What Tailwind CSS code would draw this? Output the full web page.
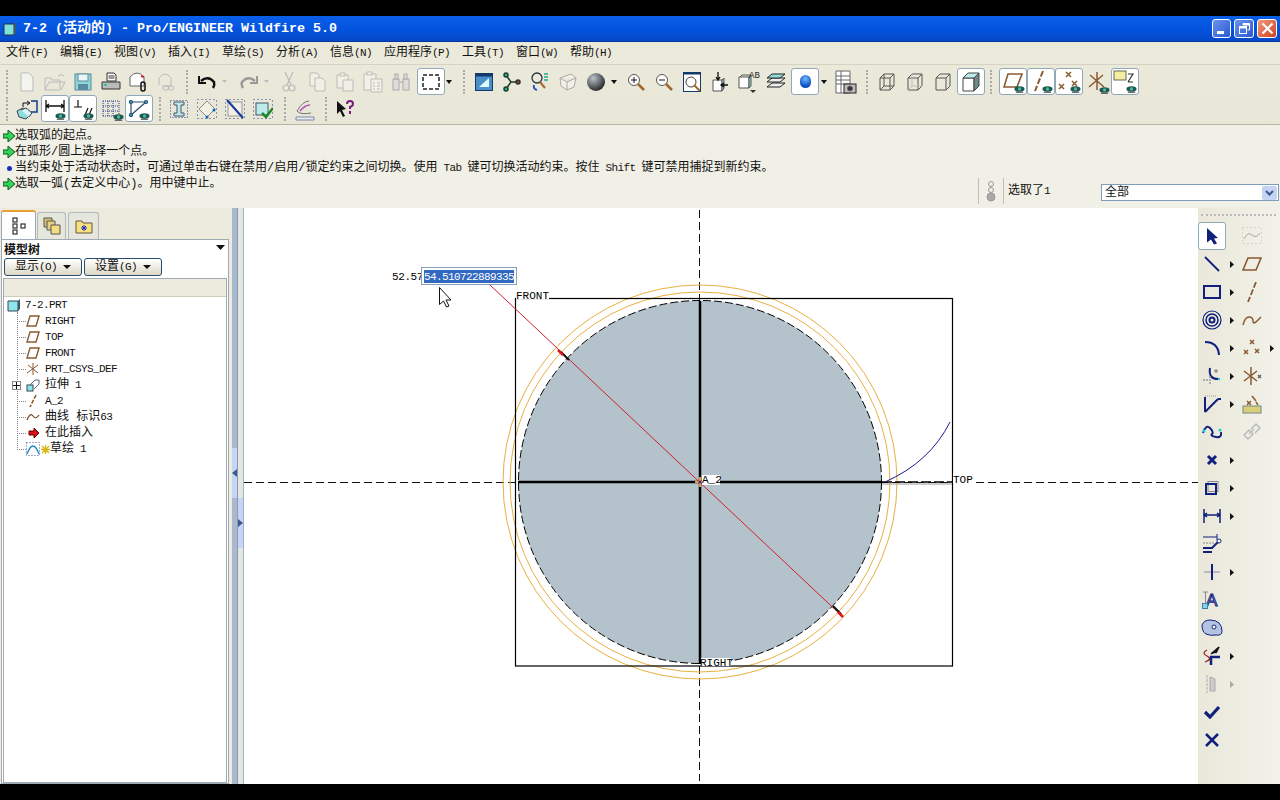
<!DOCTYPE html>
<html lang="zh-CN">
<head>
<meta charset="UTF-8">
<title>7-2 (活动的) - Pro/ENGINEER Wildfire 5.0</title>
<script src="https://cdn.jsdelivr.net/npm/@tailwindcss/browser@4"></script>
</head>
<body class="bg-black overflow-hidden">
<svg class="hidden">
  <symbol id="eye" viewBox="0 0 12 8"><ellipse cx="6" cy="4" rx="5.5" ry="3" fill="#1e5a50"/><circle cx="6" cy="4" r="1.8" fill="#4fb5a5"/><path d="M2 7.5h8" stroke="#222" stroke-width="1"/></symbol>
  <symbol id="mini" viewBox="0 0 5 7"><path d="M0 0l4 3.5L0 7z" fill="#111"/></symbol>
</svg>
<div class="w-[1280px] h-[800px] flex flex-col font-['Liberation_Mono','Noto_Sans_CJK_SC',monospace] text-[12px] leading-4 text-[#111]">
  <!-- top black band -->
  <div class="h-[16px] bg-black"></div>

  <!-- Title bar -->
  <div class="h-[26px] bg-gradient-to-b from-[#0a5fe8] via-[#0454e0] to-[#0448c8] flex items-center pl-[3px] pr-[3px] border-b border-[#03379c]">
    <svg width="14" height="14" viewBox="0 0 14 14" class="mr-[6px]"><path d="M1 2h10v11H1z" fill="#7fe0dc" stroke="#234" stroke-width="1"/><path d="M11 2l2-1v10l-2 2z" fill="#456"/></svg>
    <span class="text-white font-bold text-[13.33px] whitespace-pre">7-2 (<span class="text-[14px]">活动的</span>) - Pro/ENGINEER Wildfire 5.0</span>
    <div class="ml-auto flex gap-[3px]">
      <div class="w-[19px] h-[19px] rounded-[3px] border border-white bg-gradient-to-br from-[#6a94ef] to-[#2a57d0] flex items-end pl-[4px] pb-[3px]"><div class="w-[7px] h-[3px] bg-white"></div></div>
      <div class="w-[20px] h-[19px] rounded-[3px] border border-white bg-gradient-to-br from-[#6a94ef] to-[#2a57d0] flex items-center justify-center">
        <svg width="13" height="13" viewBox="0 0 13 13" fill="none" stroke="#fff"><path d="M5 3V1.5h6.5V8H9.5"/><path d="M5 2.5h6.5" stroke-width="2"/><rect x="1.5" y="4.5" width="7" height="7"/><path d="M1.5 5.5h7" stroke-width="2"/></svg>
      </div>
      <div class="w-[20px] h-[19px] rounded-[3px] border border-white bg-gradient-to-br from-[#ee9a7e] to-[#d23c14] flex items-center justify-center">
        <svg width="13" height="13" viewBox="0 0 13 13" stroke="#fff" stroke-width="2.2"><path d="M1.5 1.5l10 10M11.5 1.5l-10 10"/></svg>
      </div>
    </div>
  </div>

  <!-- Menu bar -->
  <div class="h-[23px] bg-[#ebe9da] flex items-center pl-[6px] gap-[12px] whitespace-nowrap border-b border-[#d5d3c4]">
    <span class="w-[42px]">文件<span class="text-[11px] tracking-[-0.6px]">(F)</span></span>
    <span class="w-[42px]">编辑<span class="text-[11px] tracking-[-0.6px]">(E)</span></span>
    <span class="w-[42px]">视图<span class="text-[11px] tracking-[-0.6px]">(V)</span></span>
    <span class="w-[42px]">插入<span class="text-[11px] tracking-[-0.6px]">(I)</span></span>
    <span class="w-[42px]">草绘<span class="text-[11px] tracking-[-0.6px]">(S)</span></span>
    <span class="w-[42px]">分析<span class="text-[11px] tracking-[-0.6px]">(A)</span></span>
    <span class="w-[42px]">信息<span class="text-[11px] tracking-[-0.6px]">(N)</span></span>
    <span class="w-[66px]">应用程序<span class="text-[11px] tracking-[-0.6px]">(P)</span></span>
    <span class="w-[42px]">工具<span class="text-[11px] tracking-[-0.6px]">(T)</span></span>
    <span class="w-[42px]">窗口<span class="text-[11px] tracking-[-0.6px]">(W)</span></span>
    <span class="w-[42px]">帮助<span class="text-[11px] tracking-[-0.6px]">(H)</span></span>
  </div>

  <!-- Toolbars -->
  <div class="h-[60px] bg-gradient-to-b from-[#ebe9da] to-[#e8e6d6] border-b border-[#b8b6a6] flex flex-col pt-[3px]">
    <!-- row 1 -->
    <div class="h-[27px] flex items-center pl-[6px]">
      <div class="w-[2px] h-[24px] border-l-2 border-dotted border-[#aaa] mr-[5px]"></div>
      <div class="w-[28px] h-[27px] flex items-center justify-center"><svg width="16" height="20" viewBox="0 0 16 20" fill="#f4f4ee" stroke="#bbb"><path d="M2 1h8l4 4v14H2z"/></svg></div>
      <div class="w-[28px] h-[27px] flex items-center justify-center"><svg width="22" height="20" viewBox="0 0 22 20" fill="none" stroke="#bbb"><path d="M1 18V6h6l1 2h8v10zM1 18l4-8h16l-4 8M14 4q3-3 6 0"/></svg></div>
      <div class="w-[28px] h-[27px] flex items-center justify-center"><svg width="18" height="18" viewBox="0 0 18 18"><rect x="1" y="1" width="16" height="16" fill="#8fd8d8" stroke="#5c8aa0"/><rect x="4" y="1" width="10" height="7" fill="#eaf6f6" stroke="#5c8aa0"/><rect x="4" y="11" width="10" height="6" fill="#5c8aa0"/></svg></div>
      <div class="w-[28px] h-[27px] flex items-center justify-center"><svg width="20" height="20" viewBox="0 0 20 20"><path d="M6 1h7l2 2v6H6z" fill="#fff" stroke="#333"/><path d="M7.500 4h6M7.500 6h6" stroke="#333"/><path d="M1 10h18v7H1z" fill="#bbb" stroke="#333"/><path d="M3 13h3" stroke="#2c9" stroke-width="2"/></svg></div>
      <div class="w-[28px] h-[27px] flex items-center justify-center"><svg width="20" height="22" viewBox="0 0 20 22" fill="#fff" stroke="#666"><path d="M1 6q7-8 14 0v9H1z"/><path d="M12 5l3 1" stroke="#b33" stroke-width="2"/><rect x="12" y="11" width="4" height="9" rx="2" fill="none" stroke="#111" stroke-width="1.500"/></svg></div>
      <div class="w-[28px] h-[27px] flex items-center justify-center"><svg width="20" height="22" viewBox="0 0 20 22" fill="none" stroke="#bbb"><path d="M2 14V7q6-8 12 0v8H5"/><rect x="6" y="15" width="6" height="4" rx="2"/><rect x="11" y="15" width="6" height="4" rx="2"/></svg></div>
      <div class="w-[2px] h-[24px] border-l-2 border-dotted border-[#aaa] ml-[5px] mr-[5px]"></div>
      <div class="w-[28px] h-[27px] flex items-center justify-center"><svg width="20" height="16" viewBox="0 0 20 16" fill="none" stroke="#111" stroke-width="2.500"><path d="M4 7q7-6 13 1 1 3-1 6"/><path d="M2 2v7h7" stroke-width="2"/></svg></div>
      <svg width="5" height="3" viewBox="0 0 5 3" class="mx-[1px]"><path d="M0 0h5L2.500 3z" fill="#bbb"/></svg>
      <div class="w-[28px] h-[27px] ml-[7px] flex items-center justify-center"><svg width="20" height="16" viewBox="0 0 20 16" fill="none" stroke="#999" stroke-width="2.500"><path d="M16 7q-7-6-13 1-1 3 1 6"/><path d="M18 2v7h-7" stroke-width="2"/></svg></div>
      <svg width="5" height="3" viewBox="0 0 5 3" class="mx-[1px]"><path d="M0 0h5L2.500 3z" fill="#bbb"/></svg>
      <div class="w-[28px] h-[27px] ml-[5px] flex items-center justify-center"><svg width="14" height="22" viewBox="0 0 14 22" fill="none" stroke="#bbb" stroke-width="1.200"><path d="M3 1l6 13M11 1L5 14"/><circle cx="4" cy="17" r="3"/><circle cx="10" cy="17" r="3"/></svg></div>
      <div class="w-[28px] h-[27px] flex items-center justify-center"><svg width="18" height="20" viewBox="0 0 18 20" fill="#f2f0e4" stroke="#bbb"><path d="M2 1h7l2 2v11H2z"/><path d="M7 6h7l3 3v10H7z"/></svg></div>
      <div class="w-[28px] h-[27px] flex items-center justify-center"><svg width="18" height="20" viewBox="0 0 18 20" fill="#f2f0e4" stroke="#bbb"><path d="M1 3h11v13H1z"/><path d="M4 1h5v3H4z"/><path d="M7 8h10v11H7z"/></svg></div>
      <div class="w-[28px] h-[27px] flex items-center justify-center"><svg width="20" height="22" viewBox="0 0 20 22" fill="#f2f0e4" stroke="#bbb"><path d="M1 3h12v16H1z"/><path d="M4 1h5v3H4z"/><path d="M8 8h11v13H8z"/><path d="M10 12h2M14 12h3M10 15h2M14 15h3M10 18h2M14 18h3"/></svg></div>
      <div class="w-[28px] h-[27px] flex items-center justify-center"><svg width="18" height="18" viewBox="0 0 18 18" fill="#ddd" stroke="#aaa"><rect x="1" y="6" width="6" height="11"/><rect x="11" y="6" width="6" height="11"/><rect x="3" y="1" width="3" height="5"/><rect x="12" y="1" width="3" height="5"/><path d="M7 9h4"/></svg></div>
      <div class="w-[28px] h-[27px] ml-[2px] bg-white border border-[#90a8b8] rounded-[3px] flex items-center justify-center"><svg width="18" height="16" viewBox="0 0 18 16" fill="none" stroke="#222" stroke-width="1.500" stroke-dasharray="4 2"><rect x="1" y="1" width="16" height="14"/></svg></div>
      <svg width="6" height="4" viewBox="0 0 6 4" class="mx-[1px]"><path d="M0 0h6L3 4z" fill="#111"/></svg>
      <div class="w-[2px] h-[24px] border-l-2 border-dotted border-[#aaa] ml-[10px] mr-[5px]"></div>
      <div class="w-[28px] h-[27px] flex items-center justify-center"><svg width="18" height="18" viewBox="0 0 18 18"><rect x=".5" y=".5" width="17" height="17" fill="#4b8ec8" stroke="#123a6a"/><rect x=".5" y=".5" width="17" height="3" fill="#123a6a"/><path d="M4 14L14 5v9z" fill="#dff"/></svg></div>
      <div class="w-[28px] h-[27px] flex items-center justify-center"><svg width="18" height="20" viewBox="0 0 18 20" fill="none" stroke="#1d3d2a" stroke-width="1.500"><path d="M3 3l5 7-5 7M8 10h7"/><circle cx="3" cy="3" r="2" fill="#1db5a0"/><circle cx="3" cy="17" r="2" fill="#1db5a0"/><circle cx="15" cy="10" r="2" fill="#c22"/></svg></div>
      <div class="w-[28px] h-[27px] flex items-center justify-center"><svg width="20" height="20" viewBox="0 0 20 20" fill="none" stroke="#234" stroke-width="1.300"><circle cx="7" cy="6" r="5"/><path d="M14 2h4M14 5h4M14 8h4" stroke="#2a8"/><path d="M10 10l5 6" stroke="#a63" stroke-width="2"/><path d="M4 13q-1 4 3 5" stroke="#25c" stroke-width="2"/></svg></div>
      <div class="w-[28px] h-[27px] flex items-center justify-center"><svg width="18" height="18" viewBox="0 0 18 18" fill="#f2f0e4" stroke="#aaa"><path d="M1 5l11-4 5 4-2 9-7 3-6-4zM1 5l7 4 9-4M8 9v8"/></svg></div>
      <div class="w-[28px] h-[27px] flex items-center justify-center"><div class="w-[18px] h-[18px] rounded-full bg-[radial-gradient(circle_at_35%_30%,#b8c4cc,#333_70%)]"></div></div>
      <svg width="6" height="4" viewBox="0 0 6 4" class="ml-[1px] mr-[5px]"><path d="M0 0h6L3 4z" fill="#111"/></svg>
      <div class="w-[28px] h-[27px] flex items-center justify-center"><svg width="18" height="18" viewBox="0 0 18 18" fill="none"><circle cx="7" cy="7" r="5.500" stroke="#555" fill="#fff"/><path d="M4 7h6M7 4v6" stroke="#111"/><path d="M11 11l6 6" stroke="#a0662a" stroke-width="2.500"/></svg></div>
      <div class="w-[28px] h-[27px] flex items-center justify-center"><svg width="18" height="18" viewBox="0 0 18 18" fill="none"><circle cx="7" cy="7" r="5.500" stroke="#555" fill="#fff"/><path d="M4 7h6" stroke="#111"/><path d="M11 11l6 6" stroke="#a0662a" stroke-width="2.500"/></svg></div>
      <div class="w-[28px] h-[27px] flex items-center justify-center"><svg width="18" height="20" viewBox="0 0 18 20" fill="none"><rect x=".5" y=".5" width="17" height="19" fill="#fff" stroke="#123a6a"/><rect x=".5" y=".5" width="17" height="2" fill="#123a6a"/><circle cx="8" cy="10" r="5" stroke="#444"/><path d="M11 13l6 6" stroke="#a0662a" stroke-width="2"/></svg></div>
      <div class="w-[28px] h-[27px] flex items-center justify-center"><svg width="18" height="20" viewBox="0 0 18 20" fill="none"><path d="M2 8h9v11H2z" fill="#fff" stroke="#555"/><path d="M11 8l2-2v10l-2 3z" fill="#8fdcdc" stroke="#555"/><path d="M7 0v7M5 5l2 3 2-3" stroke="#111" stroke-width="1.300"/><path d="M17 13h-6M13 11l-3 2 3 2" stroke="#111" stroke-width="1.300"/></svg></div>
      <div class="w-[28px] h-[27px] flex items-center justify-center relative"><svg width="20" height="22" viewBox="0 0 20 22" fill="none"><path d="M1 6h10v11H1z" fill="#fff" stroke="#555"/><path d="M11 6l2-2v11l-2 2z" fill="#8fdcdc" stroke="#555"/><path d="M2 6l2-2h9" stroke="#555"/><path d="M12 19h6l-3 3z" fill="#333"/></svg><span class="absolute left-[15px] top-[3px] text-[9px] leading-[10px] text-[#222]">AB</span></div>
      <div class="w-[28px] h-[27px] flex items-center justify-center"><svg width="20" height="18" viewBox="0 0 20 18" fill="#eee" stroke="#222"><path d="M1 14l5-4h13l-5 4z"/><path d="M1 9l5-4h13l-5 4z"/><path d="M1 5l5-4h13l-5 4z" fill="#8fdcdc"/></svg></div>
      <div class="w-[28px] h-[27px] ml-[1px] bg-white border border-[#90a8b8] rounded-[3px] flex items-center justify-center"><div class="w-[11px] h-[13px] rounded-full bg-[radial-gradient(circle_at_50%_30%,#6fb8ff,#0a4fc0_70%)]"></div></div>
      <svg width="6" height="4" viewBox="0 0 6 4" class="ml-[2px] mr-[7px]"><path d="M0 0h6L3 4z" fill="#111"/></svg>
      <div class="w-[24px] h-[27px] flex items-center justify-center"><svg width="22" height="24" viewBox="0 0 22 24" fill="#fff" stroke="#666"><path d="M1 1h14v22H1z"/><path d="M1 6h14M1 10h14M1 14h14M6 1v22"/><rect x="9" y="14" width="12" height="9" fill="#bbb" stroke="#222"/><circle cx="15" cy="18.500" r="2.500" fill="#333"/></svg></div>
      <div class="w-[2px] h-[24px] border-l-2 border-dotted border-[#aaa] ml-[8px] mr-[5px]"></div>
      <div class="w-[28px] h-[27px] flex items-center justify-center"><svg width="16" height="18" viewBox="0 0 16 18" fill="none" stroke="#555"><path d="M1 5h10v12H1zM1 5l4-4h10v12l-4 4M5 1v12h10M1 17l4-4M11 5l4-4"/></svg></div>
      <div class="w-[28px] h-[27px] flex items-center justify-center"><svg width="16" height="18" viewBox="0 0 16 18" fill="none" stroke="#555"><path d="M1 5h10v12H1zM1 5l4-4h10v12l-4 4M11 5l4-4"/><path d="M5 1v12h10M1 17l4-4" stroke="#bbb"/></svg></div>
      <div class="w-[28px] h-[27px] flex items-center justify-center"><svg width="16" height="18" viewBox="0 0 16 18" fill="none" stroke="#555"><path d="M1 5h10v12H1zM1 5l4-4h10v12l-4 4M11 5l4-4"/></svg></div>
      <div class="w-[28px] h-[27px] bg-white border border-[#90a8b8] rounded-[3px] flex items-center justify-center"><svg width="18" height="20" viewBox="0 0 18 20"><path d="M1 6h11v13H1z" fill="#fff" stroke="#444"/><path d="M1 6l5-5h11l-5 5z" fill="#bdeaea" stroke="#444"/><path d="M12 6l5-5v13l-5 5z" fill="#6c8a8a" stroke="#444"/></svg></div>
      <div class="w-[2px] h-[24px] border-l-2 border-dotted border-[#aaa] ml-[5px] mr-[7px]"></div>
      <div class="w-[28px] h-[27px] bg-white border border-[#90a8b8] rounded-[3px] relative"><svg width="20" height="16" viewBox="0 0 20 16" class="ml-[3px] mt-[4px]" fill="none" stroke="#8a5a30" stroke-width="1.600"><path d="M5 1h14l-5 13H1z"/></svg><svg class="absolute right-[1px] bottom-[1px]" width="11" height="8"><use href="#eye"/></svg></div>
      <div class="w-[28px] h-[27px] bg-white border border-[#90a8b8] rounded-[3px] relative"><svg width="12" height="22" viewBox="0 0 12 22" class="ml-[5px] mt-[1px]" stroke="#8a5a30" stroke-width="2" stroke-dasharray="6 2"><path d="M10 1L2 21"/></svg><svg class="absolute right-[1px] bottom-[1px]" width="11" height="8"><use href="#eye"/></svg></div>
      <div class="w-[28px] h-[27px] bg-white border border-[#90a8b8] rounded-[3px] relative"><svg width="22" height="22" viewBox="0 0 22 22" class="ml-[2px] mt-[1px]" stroke="#8a5a30" stroke-width="1.500"><path d="M8 2l5 5M13 2L8 7M1 14l5 5M6 14l-5 5M14 11l5 5M19 11l-5 5"/></svg><svg class="absolute right-[1px] bottom-[1px]" width="11" height="8"><use href="#eye"/></svg></div>
      <div class="w-[28px] h-[27px] relative"><svg width="24" height="24" viewBox="0 0 24 24" class="ml-[2px] mt-[1px]" stroke="#8a5a30" stroke-width="1.500" fill="none"><path d="M12 3v18M4 18L18 6M5 6l14 12"/></svg><svg class="absolute right-[1px] bottom-[1px]" width="11" height="8"><use href="#eye"/></svg></div>
      <div class="w-[28px] h-[27px] bg-white border border-[#90a8b8] rounded-[3px] relative"><svg width="24" height="22" viewBox="0 0 24 22" class="ml-[1px] mt-[1px]" fill="none"><rect x="1" y="1" width="12" height="9" fill="#f4eea0" stroke="#665"/><path d="M15 4h5l-5 8M15 12h5" stroke="#333" stroke-width="1.200"/></svg><svg class="absolute right-[1px] bottom-[1px]" width="11" height="8"><use href="#eye"/></svg></div>
    </div>
    <!-- row 2 -->
    <div class="h-[27px] flex items-center pl-[6px]">
      <div class="w-[2px] h-[24px] border-l-2 border-dotted border-[#aaa] mr-[5px]"></div>
      <div class="w-[28px] h-[27px] flex items-center justify-center"><svg width="22" height="22" viewBox="0 0 22 22" fill="none"><path d="M15 3h6v11h-6" stroke="#123a8a" stroke-width="1.500"/><path d="M7 9V5h6M11 3l3 2-3 2" stroke="#111"/><path d="M1 13l6-3 8 6-5 5-7-2z" fill="#8fdcdc" stroke="#345"/><path d="M5 12l5-2 6 5-3 4" fill="#d8f4f4" stroke="#345"/></svg></div>
      <div class="w-[28px] h-[27px] bg-white border border-[#90a8b8] rounded-[3px] relative"><svg width="20" height="12" viewBox="0 0 20 12" class="ml-[3px] mt-[4px]" stroke="#111" stroke-width="1.300" fill="none"><path d="M1 0v12M19 0v12M1 6h18M4 4L1 6l3 2M16 4l3 2-3 2"/></svg><svg class="absolute right-[2px] bottom-[1px]" width="11" height="8"><use href="#eye"/></svg></div>
      <div class="w-[28px] h-[27px] bg-white border border-[#90a8b8] rounded-[3px] relative"><svg width="20" height="18" viewBox="0 0 20 18" class="ml-[3px] mt-[3px]" stroke="#111" stroke-width="1.200" fill="none"><path d="M1 8h8M5 1v7M12 16l3-7M16 16l3-7"/></svg><svg class="absolute right-[2px] bottom-[1px]" width="11" height="8"><use href="#eye"/></svg></div>
      <div class="w-[28px] h-[27px] relative flex items-center justify-center"><svg width="18" height="18" viewBox="0 0 18 18" stroke="#2a3a90" stroke-width="1" stroke-dasharray="1 1" fill="none"><path d="M1 1h16M1 6h16M1 11h16M1 16h16M1 1v16M6 1v16M11 1v16M17 1v16"/></svg><svg class="absolute right-[1px] bottom-[1px]" width="11" height="8"><use href="#eye"/></svg></div>
      <div class="w-[28px] h-[27px] bg-white border border-[#90a8b8] rounded-[3px] relative"><svg width="20" height="18" viewBox="0 0 20 18" class="ml-[3px] mt-[3px]" stroke="#2a4a70" stroke-width="1.200" fill="none"><path d="M2 3h15M2 3v13M2 16L17 3"/><circle cx="2" cy="3" r="1.500" fill="#2cc"/><circle cx="17" cy="3" r="1.500" fill="#2cc"/><circle cx="2" cy="16" r="1.500" fill="#2cc"/></svg><svg class="absolute right-[2px] bottom-[1px]" width="11" height="8"><use href="#eye"/></svg></div>
      <div class="w-[2px] h-[24px] border-l-2 border-dotted border-[#aaa] ml-[6px] mr-[4px]"></div>
      <div class="w-[28px] h-[27px] flex items-center justify-center"><svg width="18" height="18" viewBox="0 0 18 18"><path d="M4 2h10v3h-3v8h3v3H4v-3h3V5H4z" fill="#bdeaea" stroke="#456"/><rect x=".5" y=".5" width="17" height="17" fill="none" stroke="#2a3a90" stroke-dasharray="1 2"/></svg></div>
      <div class="w-[28px] h-[27px] flex items-center justify-center"><svg width="20" height="20" viewBox="0 0 20 20"><path d="M10 2l8 8-8 8-8-8z" fill="#f2f0e4" stroke="#888"/><rect x=".5" y=".5" width="19" height="19" fill="none" stroke="#2a3a90" stroke-dasharray="1 3"/><circle cx="17" cy="11" r="1.500" fill="#16a"/><circle cx="10" cy="18" r="1.500" fill="#16a"/></svg></div>
      <div class="w-[28px] h-[27px] flex items-center justify-center"><svg width="20" height="20" viewBox="0 0 20 20"><rect x="3" y="3" width="14" height="14" fill="#f2f0e4" stroke="#999"/><path d="M2 1l16 18" stroke="#123a9a" stroke-width="2"/><rect x=".5" y=".5" width="19" height="19" fill="none" stroke="#2a3a90" stroke-dasharray="1 3"/></svg></div>
      <div class="w-[28px] h-[27px] flex items-center justify-center"><svg width="20" height="20" viewBox="0 0 20 20"><rect x="3" y="4" width="12" height="12" fill="#bdeaea" stroke="#456"/><rect x=".5" y=".5" width="19" height="19" fill="none" stroke="#2a3a90" stroke-dasharray="1 3"/><path d="M9 14l4 4 7-9" fill="none" stroke="#1a8a2a" stroke-width="2.500"/></svg></div>
      <div class="w-[2px] h-[24px] border-l-2 border-dotted border-[#aaa] ml-[7px] mr-[5px]"></div>
      <div class="w-[28px] h-[27px] flex items-center justify-center"><svg width="20" height="24" viewBox="0 0 20 24" fill="none"><path d="M2 14q6-10 12-10" stroke="#777"/><path d="M5 14q5-6 10-6" stroke="#b64cc0" stroke-width="1.500"/><path d="M2 14q3 4 14 2" stroke="#777"/><path d="M1 20h18v3H1z" fill="#eee" stroke="#78a"/></svg></div>
      <div class="w-[2px] h-[24px] border-l-2 border-dotted border-[#aaa] ml-[6px] mr-[4px]"></div>
      <div class="w-[28px] h-[27px] flex items-center justify-center"><svg width="18" height="18" viewBox="0 0 18 18"><path d="M1 1l9 8-4 1 3 6-2 1-3-6-3 3z" fill="#111"/><path d="M11 4q0-3 3-3t3 3q0 2-3 3v2" fill="none" stroke="#7a1a7a" stroke-width="2"/><path d="M14 11v3" stroke="#7a1a7a" stroke-width="2"/></svg></div>
    </div>
  </div>

  <!-- Message area -->
  <div class="h-[83px] bg-[#f1f0e6] relative flex flex-col pt-[3px] whitespace-pre">
    <div class="h-[16px] flex items-center pl-[3px]"><svg width="12" height="12" viewBox="0 0 12 12"><path d="M0 4h5V0l7 6-7 6V8H0z" fill="#35d25a" stroke="#0b5a20"/></svg><span>选取弧的起点。</span></div>
    <div class="h-[16px] flex items-center pl-[3px]"><svg width="12" height="12" viewBox="0 0 12 12"><path d="M0 4h5V0l7 6-7 6V8H0z" fill="#35d25a" stroke="#0b5a20"/></svg><span>在弧形/圆上选择一个点。</span></div>
    <div class="h-[16px] flex items-center pl-[3px]"><div class="w-[12px] flex justify-center"><div class="w-[5px] h-[5px] rounded-full bg-[#1530c8]"></div></div><span>当约束处于活动状态时，可通过单击右键在禁用/启用/锁定约束之间切换。使用<span class="text-[11px] tracking-[-0.6px]"> Tab </span>键可切换活动约束。按住<span class="text-[11px] tracking-[-0.6px]"> Shift </span>键可禁用捕捉到新约束。</span></div>
    <div class="h-[16px] flex items-center pl-[3px]"><svg width="12" height="12" viewBox="0 0 12 12"><path d="M0 4h5V0l7 6-7 6V8H0z" fill="#35d25a" stroke="#0b5a20"/></svg><span>选取一弧(去定义中心)。用中键中止。</span></div>
    <!-- selection status, sits over the message pane -->
    <div class="absolute left-[978px] top-[53px] h-[26px] flex items-center">
      <div class="w-[1px] h-[26px] bg-[#c2c0b0]"></div>
      <svg width="24" height="24" viewBox="0 0 24 24" fill="none" stroke="#999"><circle cx="12" cy="5" r="2.500"/><circle cx="12" cy="11" r="2.500"/><circle cx="12" cy="18" r="4" fill="#aaa"/></svg>
      <div class="w-[1px] h-[26px] bg-[#c2c0b0]"></div>
      <span class="ml-[4px]">选取了<span class="text-[11px] tracking-[-0.6px]">1</span></span>
    </div>
    <div class="absolute left-[1101px] top-[59px] w-[178px] h-[17px] bg-white border border-[#7f9db9] flex items-center pl-[3px]"><span>全部</span><div class="ml-auto mr-[1px] w-[15px] h-[14px] rounded-[2px] bg-[#c4d4f2] flex items-center justify-center"><svg width="9" height="6" viewBox="0 0 9 6" fill="none" stroke="#3a5a90" stroke-width="2"><path d="M1 1l3.500 3.500L8 1"/></svg></div></div>
  </div>

  <!-- Main -->
  <div class="h-[576px] flex bg-[#ecebdd]">
    <!-- Model tree panel -->
    <div class="w-[232px] flex flex-col pl-[1px] pr-[3px] pt-[2px]">
      <div class="h-[29px] flex items-end">
        <div class="w-[35px] h-[29px] bg-white border border-b-0 border-[#9aa8b8] border-t-2 border-t-[#e8a030] rounded-t-[3px] flex items-center justify-center"><svg width="14" height="18" viewBox="0 0 14 18" fill="#fff" stroke="#333" stroke-width="1.200"><rect x="1" y="1" width="4" height="4"/><rect x="1" y="7" width="4" height="4"/><rect x="9" y="7" width="4" height="4"/><rect x="1" y="13" width="4" height="4"/></svg></div>
        <div class="ml-[1px] w-[29px] h-[27px] bg-[#e5e6dc] border border-b-0 border-[#b0b8c0] rounded-t-[3px] flex items-center justify-center"><svg width="18" height="18" viewBox="0 0 18 18" stroke="#555" fill="#f4dc80"><path d="M1 1h8v9H1z" fill="#d8c070"/><path d="M4 4h8v9H4z" fill="#e8d080"/><path d="M8 8h9v9H8z"/></svg></div>
        <div class="ml-[2px] w-[31px] h-[27px] bg-[#e5e6dc] border border-b-0 border-[#b0b8c0] rounded-t-[3px] flex items-center justify-center"><svg width="18" height="16" viewBox="0 0 18 16" stroke="#654" fill="#f4e27c"><path d="M1 3h6l1 2h9v10H1z"/><path d="M9 7v6M6 10h6M7 8l4 4M11 8l-4 4" stroke="#1a2ac0"/></svg></div>
      </div>
      <div class="flex-1 bg-white border border-[#a0aab4] flex flex-col px-[1px]">
        <div class="h-[18px] flex items-center justify-between pl-[1px] pr-[2px] pt-[3px]"><span class="font-bold">模型树</span><svg width="9" height="5" viewBox="0 0 9 5" class="-mt-[6px]"><path d="M0 0h9L4.500 5z" fill="#111"/></svg></div>
        <div class="h-[19px] flex gap-[2px] pl-[1px]">
          <div class="w-[78px] h-[18px] border border-[#274b6a] rounded-[3px] bg-gradient-to-b from-white to-[#dcd9c8] flex items-center justify-center gap-[6px]"><span>显示<span class="text-[11px] tracking-[-0.6px]">(O)</span></span><svg width="8" height="4" viewBox="0 0 8 4"><path d="M0 0h8L4 4z" fill="#111"/></svg></div>
          <div class="w-[78px] h-[18px] border border-[#274b6a] rounded-[3px] bg-gradient-to-b from-white to-[#dcd9c8] flex items-center justify-center gap-[6px]"><span>设置<span class="text-[11px] tracking-[-0.6px]">(G)</span></span><svg width="8" height="4" viewBox="0 0 8 4"><path d="M0 0h8L4 4z" fill="#111"/></svg></div>
        </div>
        <div class="flex-1 mt-[1px] border border-[#a0aab4] flex flex-col">
          <div class="h-[18px] bg-[#ecebdd] border-b border-[#cfcdbd]"></div>
          <div class="flex-1 flex flex-col relative">
            <div class="absolute left-[13px] top-[15px] h-[136px] border-l border-dotted border-[#888]"></div>
            <div class="h-[16px] flex items-center pl-[3px] gap-[4px]"><svg width="14" height="14" viewBox="0 0 14 14"><path d="M1 3h10v10H1z" fill="#8fe6ea" stroke="#345"/><path d="M11 3l2-2v10l-2 2z" fill="#456"/></svg><span class="text-[11px] tracking-[-0.6px]">7-2.PRT</span></div>
            <div class="h-[16px] flex items-center pl-[13px]"><div class="w-[9px] border-t border-dotted border-[#888]"></div><svg width="14" height="12" viewBox="0 0 14 12" fill="none" stroke="#8a5a30" stroke-width="1.400"><path d="M4 1h9l-3 10H1z"/></svg><span class="text-[11px] tracking-[-0.6px] ml-[5px]">RIGHT</span></div>
            <div class="h-[16px] flex items-center pl-[13px]"><div class="w-[9px] border-t border-dotted border-[#888]"></div><svg width="14" height="12" viewBox="0 0 14 12" fill="none" stroke="#8a5a30" stroke-width="1.400"><path d="M4 1h9l-3 10H1z"/></svg><span class="text-[11px] tracking-[-0.6px] ml-[5px]">TOP</span></div>
            <div class="h-[16px] flex items-center pl-[13px]"><div class="w-[9px] border-t border-dotted border-[#888]"></div><svg width="14" height="12" viewBox="0 0 14 12" fill="none" stroke="#8a5a30" stroke-width="1.400"><path d="M4 1h9l-3 10H1z"/></svg><span class="text-[11px] tracking-[-0.6px] ml-[5px]">FRONT</span></div>
            <div class="h-[16px] flex items-center pl-[13px]"><div class="w-[9px] border-t border-dotted border-[#888]"></div><svg width="14" height="14" viewBox="0 0 14 14" fill="none" stroke="#8a5a30" stroke-width="1"><path d="M7 1v12M1 11L12 3M2 3l10 8"/></svg><span class="text-[11px] tracking-[-0.6px] ml-[5px]">PRT_CSYS_DEF</span></div>
            <div class="h-[16px] flex items-center pl-[13px] relative"><div class="absolute left-[8px] top-[4px] w-[9px] h-[9px] bg-white border border-[#888] flex items-center justify-center"><svg width="7" height="7" viewBox="0 0 7 7" stroke="#111"><path d="M0 3.500h7M3.500 0v7"/></svg></div><div class="w-[9px]"></div><svg width="14" height="14" viewBox="0 0 14 14" fill="none"><rect x="1" y="7" width="6" height="6" fill="#8fe6ea" stroke="#345"/><path d="M4 7l5-5h4v4l-5 5" stroke="#567"/></svg><span class="ml-[5px]">拉伸<span class="text-[11px] tracking-[-0.6px]"> 1</span></span></div>
            <div class="h-[16px] flex items-center pl-[13px]"><div class="w-[9px] border-t border-dotted border-[#888]"></div><svg width="14" height="14" viewBox="0 0 14 14" stroke="#8a5a30" stroke-width="1.600" stroke-dasharray="4 1.500"><path d="M10 1L4 13"/></svg><span class="text-[11px] tracking-[-0.6px] ml-[5px]">A_2</span></div>
            <div class="h-[16px] flex items-center pl-[13px]"><div class="w-[9px] border-t border-dotted border-[#888]"></div><svg width="14" height="10" viewBox="0 0 14 10" fill="none" stroke="#6a4020" stroke-width="1.200"><path d="M1 8q3-8 6-4t6-1"/></svg><span class="ml-[5px]">曲线 标识<span class="text-[11px] tracking-[-0.6px]">63</span></span></div>
            <div class="h-[16px] flex items-center pl-[13px]"><div class="w-[9px] border-t border-dotted border-[#888]"></div><svg width="14" height="12" viewBox="0 0 14 12"><path d="M3 4h5V1l5 5-5 5V8H3z" fill="#d8101a" stroke="#600"/></svg><span class="ml-[5px]">在此插入</span></div>
            <div class="h-[16px] flex items-center pl-[13px]"><div class="w-[9px] border-t border-dotted border-[#888]"></div><svg width="14" height="14" viewBox="0 0 14 14" fill="none"><rect x=".5" y=".5" width="13" height="13" stroke="#3a5ab0" stroke-dasharray="1 2"/><path d="M1 12q6-16 12 0" stroke="#1a8ac0" stroke-width="1.300"/></svg><svg width="9" height="9" viewBox="0 0 9 9" stroke="#d8b810" stroke-width="1.300" class="ml-[1px]"><path d="M4.500 0v9M0 4.500h9M1 1l7 7M8 1L1 8"/></svg><span>草绘<span class="text-[11px] tracking-[-0.6px]"> 1</span></span></div>
          </div>
        </div>
      </div>
    </div>

    <!-- Splitter -->
    <div class="w-[12px] flex">
      <div class="w-[6px] flex flex-col bg-[#a9b8cc] border-r border-[#8a9ab4]">
        <div class="h-[240px]"></div>
        <div class="h-[50px] bg-[#c6d4f6] flex items-center justify-center"><svg width="5" height="8" viewBox="0 0 5 8"><path d="M5 0v8L0 4z" fill="#3a5a90"/></svg></div>
      </div>
      <div class="w-[6px] flex flex-col bg-[#e4e6e0] border-r border-[#9fb0c8]">
        <div class="h-[290px]"></div>
        <div class="h-[50px] bg-[#c6d4f6] flex items-center justify-center"><svg width="5" height="8" viewBox="0 0 5 8"><path d="M0 0v8l5-4z" fill="#3a5a90"/></svg></div>
      </div>
    </div>

    <!-- Graphics canvas -->
    <svg class="block bg-white" width="954" height="576" viewBox="244 208 954 576" font-family="'Liberation Mono',monospace" font-size="11" fill="#000">
      <path d="M244 482.500H1198" stroke="#111" stroke-dasharray="8 4" fill="none"/>
      <path d="M699.500 210V781" stroke="#111" stroke-dasharray="8 4" fill="none"/>
      <circle cx="700" cy="482" r="197" fill="none" stroke="#e8b040"/>
      <circle cx="700" cy="482" r="190" fill="none" stroke="#e8b040"/>
      <rect x="515.500" y="298.500" width="437" height="367.500" fill="none" stroke="#000" stroke-width="1.200"/>
      <circle cx="700" cy="482" r="181.500" fill="#b4c2cc"/>
      <circle cx="700" cy="482" r="181.500" fill="none" stroke="#000" stroke-dasharray="8 3"/>
      <path d="M700 301V664" stroke="#000" stroke-width="2.500"/>
      <path d="M518 482H882" stroke="#000" stroke-width="2.500"/>
      <path d="M882 482H952" stroke="#000" stroke-width="1.500" stroke-dasharray="10 3"/>
      <path d="M882 484H952" stroke="#999"/>
      <path d="M885 482Q930 462 950 422" fill="none" stroke="#1a1a90"/>
      <path d="M490 285L843 617" stroke="#d02030"/>
      <path d="M561 352l8 8M833 606l8 8" stroke="#111" stroke-width="2"/>
      <path d="M558 350l5 5M838 612l5 5" stroke="#e01020" stroke-width="2.500"/>
      <path d="M695 482h10M700 477v10" stroke="#d8a040" stroke-width="2"/>
      <circle cx="700" cy="482" r="1.500" fill="#602080"/>
      <rect x="516" y="289" width="33" height="10" fill="#fff"/>
      <text x="516" y="298.500">FRONT</text>
      <rect x="953" y="473" width="19" height="10" fill="#fff"/>
      <text x="953" y="482.500">TOP</text>
      <rect x="701" y="658" width="30" height="8" fill="#fff"/>
      <text x="700" y="666">RIGHT</text>
      <rect x="702" y="475" width="18" height="10" fill="#fff"/>
      <text x="702" y="483">A_2</text>
      <text x="392" y="280" font-size="11" letter-spacing="-.4">52.57</text>
      <rect x="421.500" y="267.500" width="95" height="17" fill="#fff" stroke="#8a9fb8"/>
      <rect x="424" y="270" width="90" height="13" fill="#3168c0"/>
      <text x="424" y="280" font-size="11" letter-spacing="-.6" fill="#fff">54.510722889335</text>
      <path d="M439.500 287.500v17l4-3.500 3 6 2.500-1-3-6h5z" fill="#fff" stroke="#111"/>
    </svg>

    <!-- Right toolbar -->
    <div class="w-[82px] bg-gradient-to-r from-[#e9e8da] to-[#f3f2ea] flex flex-col pt-[6px]">
      <div class="ml-[3px] w-[75px] border-t-2 border-dotted border-[#bbb] h-[6px]"></div>
      <div class="grid grid-cols-[28px_12px_28px_12px] auto-rows-[28px] items-center justify-items-center mt-[2px]">
        <div class="w-[28px] h-[28px] bg-white border border-[#8fa8b8] rounded-[3px] flex items-center justify-center"><svg width="14" height="18" viewBox="0 0 14 18"><path d="M2 1l11 10-4 .5 3 5-3 1-3-5-4 3z" fill="#10207c"/></svg></div><div></div>
        <svg width="20" height="20" viewBox="0 0 20 20" fill="none"><path d="M2 13q4-8 8-4t8-2" stroke="#aaa"/><rect x=".5" y="1.500" width="19" height="16" stroke="#bbb" stroke-dasharray="1 3"/></svg><div></div>

        <svg width="18" height="18" viewBox="0 0 18 18" stroke="#10207c" stroke-width="1.800"><path d="M2 2l14 14"/></svg><svg width="5" height="7"><use href="#mini"/></svg>
        <svg width="20" height="14" viewBox="0 0 20 14" fill="none" stroke="#8a5a30" stroke-width="1.600"><path d="M6 1h13l-5 12H1z"/></svg><div></div>

        <svg width="18" height="14" viewBox="0 0 18 14" fill="none" stroke="#10207c" stroke-width="2"><rect x="1" y="1" width="16" height="12"/></svg><svg width="5" height="7"><use href="#mini"/></svg>
        <svg width="10" height="20" viewBox="0 0 10 20" stroke="#8a5a30" stroke-width="1.800" stroke-dasharray="6 2"><path d="M9 0L1 20"/></svg><div></div>

        <svg width="20" height="20" viewBox="0 0 20 20" fill="none" stroke="#10207c" stroke-width="1.200"><circle cx="10" cy="10" r="9"/><circle cx="10" cy="10" r="6" stroke-width="1.500"/><circle cx="10" cy="10" r="2.500" stroke-width="2"/></svg><svg width="5" height="7"><use href="#mini"/></svg>
        <svg width="20" height="14" viewBox="0 0 20 14" fill="none" stroke="#8a5a30" stroke-width="1.500"><path d="M1 12q2-8 6-8t4 4 4 0 4-4"/></svg><div></div>

        <svg width="16" height="16" viewBox="0 0 16 16" fill="none" stroke="#10207c" stroke-width="2"><path d="M1 2q13 0 14 13"/></svg><svg width="5" height="7"><use href="#mini"/></svg>
        <svg width="18" height="18" viewBox="0 0 18 18" stroke="#8a5a30" stroke-width="1.500"><path d="M7 1l4 4M11 1L7 5M1 11l4 4M5 11l-4 4M12 10l4 4M16 10l-4 4"/></svg><svg width="5" height="7"><use href="#mini"/></svg>

        <svg width="20" height="20" viewBox="0 0 20 20" fill="none" stroke="#10207c" stroke-width="2"><path d="M8 2q-2 12 10 11"/><path d="M1 14h6M8 10v8" stroke="#999" stroke-dasharray="2 1" stroke-width="1.500"/><path d="M14 3v4M12 5h4" stroke="#777" stroke-width="1"/><circle cx="17" cy="13" r="1.200" fill="#2cd" stroke="none"/></svg><svg width="5" height="7"><use href="#mini"/></svg>
        <svg width="20" height="20" viewBox="0 0 20 20" fill="none" stroke="#8a5a30" stroke-width="1.500"><path d="M9 1v18M2 15L15 5M2 5l13 10"/><path d="M16 9l3 3M19 9l-3 3" stroke="#666"/></svg><div></div>

        <svg width="18" height="20" viewBox="0 0 18 20" fill="none" stroke="#10207c" stroke-width="2"><path d="M2 18L15 5M2 3v15M15 5h3"/><path d="M2 2h12" stroke="#999" stroke-width="1" stroke-dasharray="1 1"/></svg><svg width="5" height="7"><use href="#mini"/></svg>
        <svg width="20" height="20" viewBox="0 0 20 20"><rect x="1" y="12" width="18" height="7" fill="#d8d078" stroke="#788"/><path d="M5 7l4 4M9 7l-4 4M10 2l4 5M14 8l2 3" stroke="#8a5a30" stroke-width="1.500"/></svg><div></div>

        <svg width="20" height="14" viewBox="0 0 20 14" fill="none" stroke="#10207c" stroke-width="2"><path d="M1 8q3-9 7-5t2 6 4 3 5-5"/><circle cx="2" cy="6" r="1.500" fill="#2cd" stroke="none"/><circle cx="18" cy="5" r="1.500" fill="#2cd" stroke="none"/></svg><div></div>
        <svg width="20" height="20" viewBox="0 0 20 20" fill="none" stroke="#bbb" stroke-width="1.500"><path d="M2 13l5-5 4 4-5 5zM9 7l5-5 4 4-5 5M7 12l5-5"/></svg><div></div>

        <svg width="12" height="12" viewBox="0 0 12 12" stroke="#10207c" stroke-width="3"><path d="M2 2l8 8M10 2l-8 8"/></svg><svg width="5" height="7"><use href="#mini"/></svg>
        <div></div><div></div>

        <svg width="14" height="14" viewBox="0 0 14 14" fill="none"><rect x="3" y=".5" width="10" height="10" stroke="#888"/><rect x="1" y="3" width="10" height="10" stroke="#10207c" stroke-width="2"/></svg><svg width="5" height="7"><use href="#mini"/></svg>
        <div></div><div></div>

        <svg width="18" height="14" viewBox="0 0 18 14" fill="none" stroke="#10207c" stroke-width="1.500"><path d="M1 0v14M17 0v14M1 6h16M4 4L1 6l3 2M14 4l3 2-3 2"/></svg><svg width="5" height="7"><use href="#mini"/></svg>
        <div></div><div></div>

        <svg width="20" height="20" viewBox="0 0 20 20" fill="none" stroke="#10207c"><path d="M1 3h14M15 0v6" stroke-width="1"/><path d="M1 9h11" stroke="#888" stroke-dasharray="2 1"/><path d="M1 14h9l7-7" stroke-width="2"/><circle cx="17" cy="7" r="2" fill="#fff"/><path d="M1 18h9" stroke-width="2"/></svg><div></div>
        <div></div><div></div>

        <svg width="18" height="18" viewBox="0 0 18 18"><path d="M1 9h16" stroke="#aab" stroke-width="1.500"/><path d="M9 1v16" stroke="#10207c" stroke-width="2"/></svg><svg width="5" height="7"><use href="#mini"/></svg>
        <div></div><div></div>

        <div class="relative w-[20px] h-[18px]"><span class="absolute left-[4px] top-[1px] text-[17px] leading-[17px] font-['Liberation_Sans',sans-serif] text-[#eef] [-webkit-text-stroke:1px_#10207c]">A</span><svg width="7" height="18" viewBox="0 0 7 18" class="absolute left-0 top-0" stroke="#889"><path d="M1 1h5M3.500 1v12"/><rect x=".5" y="12.500" width="5" height="5" fill="#8fd0ee" stroke="#38a"/></svg></div><div></div>
        <div></div><div></div>

        <svg width="22" height="18" viewBox="0 0 22 18"><path d="M1 6q2-5 8-5t9 3 3 8-6 4q-6 1-10-1T1 6z" fill="#b4c4e0" stroke="#10207c"/><circle cx="13" cy="8" r="2" fill="#fff" stroke="#10207c"/></svg><div></div>
        <div></div><div></div>

        <svg width="20" height="20" viewBox="0 0 20 20" fill="none"><path d="M5 4q-6 3 0 6t-2 6" stroke="#a02020" stroke-width="1.300"/><path d="M9 19V11h9" stroke="#10207c" stroke-width="2.500"/><path d="M9 8l8-7-3 6" fill="#111" stroke="#111" stroke-width="1.500"/></svg><svg width="5" height="7"><use href="#mini"/></svg>
        <div></div><div></div>

        <svg width="14" height="20" viewBox="0 0 14 20" fill="none" stroke="#aaa"><path d="M2 1v18" stroke-dasharray="3 1"/><path d="M5 3l5 2v12H5z" fill="#ccc"/></svg><svg width="5" height="7" class="opacity-30"><use href="#mini"/></svg>
        <div></div><div></div>

        <svg width="18" height="14" viewBox="0 0 18 14" fill="none" stroke="#10207c" stroke-width="3.200"><path d="M2 7l5 5 9-10"/></svg><div></div>
        <div></div><div></div>

        <svg width="14" height="14" viewBox="0 0 14 14" stroke="#10207c" stroke-width="2.500"><path d="M1 1l12 12M13 1L1 13"/></svg><div></div>
        <div></div><div></div>
      </div>
    </div>
  </div>

  <div class="flex-1 bg-black"></div>
</div>
</body>
</html>
